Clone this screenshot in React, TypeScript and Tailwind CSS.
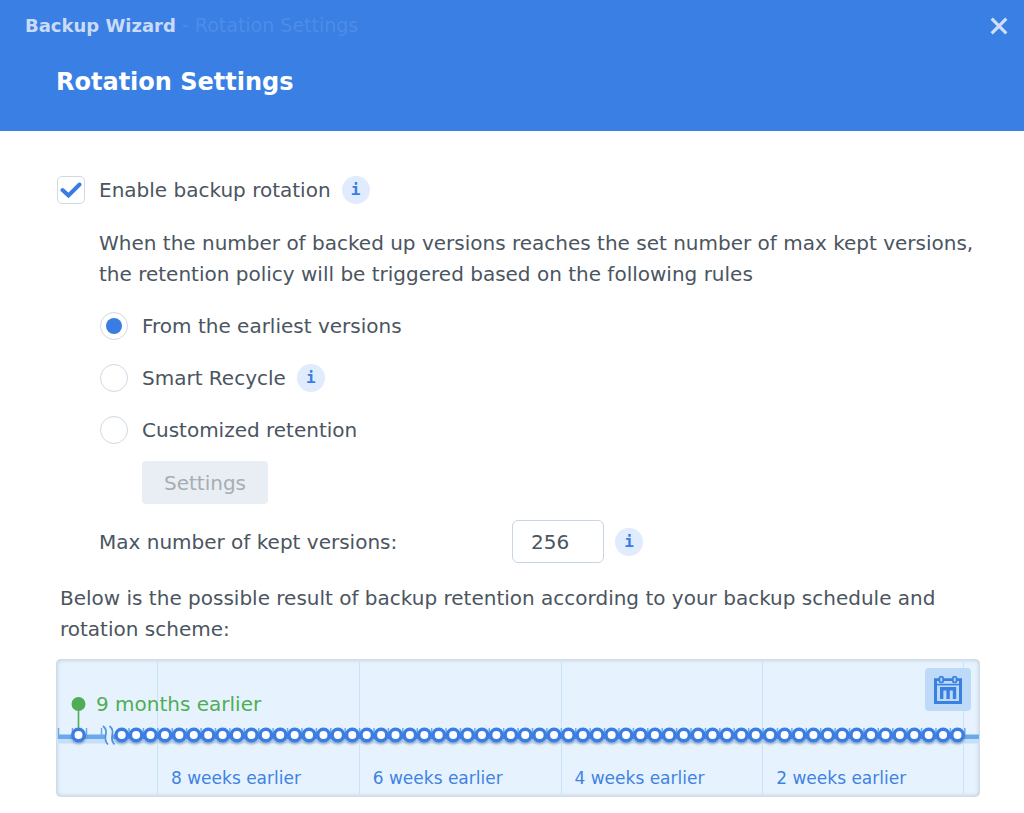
import { useState } from 'react';
import { clsx } from 'clsx';

const POLICIES = [
  { id: 'earliest', label: 'From the earliest versions', info: false },
  { id: 'smart', label: 'Smart Recycle', info: true },
  { id: 'custom', label: 'Customized retention', info: false },
];

const WEEKS = ['8 weeks earlier', '6 weeks earlier', '4 weeks earlier', '2 weeks earlier'];

// One slot per day, counted back from the newest version
const DAYS = 59;
const DAY_WIDTH = 14.41;
const LAST_TICK = 908;

const InfoButton = ({ label }: { label: string }) => (
  <button
    type="button"
    aria-label={label}
    className="flex size-7 items-center justify-center rounded-full bg-[#e0ebfd] font-['DejaVu_Sans_Mono',monospace] text-base leading-none font-bold text-[#3a7de2]"
  >
    i
  </button>
);

const CalendarIcon = () => (
  <svg viewBox="0 0 28 28" className="size-7" fill="none" stroke="#3a80e0" aria-hidden="true">
    <path d="M1.5 3V26.500H26.500V3" strokeWidth="3" />
    <path d="M0 3.6H5M9.500 3.6H18.5M23 3.6H28" strokeWidth="2.8" />
    <path d="M2 8.600H26" strokeWidth="1.6" />
    <rect x="5.500" y="0.900" width="3.6" height="5.400" rx="1" strokeWidth="1.800" />
    <rect x="18.900" y="0.900" width="3.6" height="5.400" rx="1" strokeWidth="1.800" />
    <path d="M6 12.800H22.200M7.700 13V23M14.100 13V23M20.500 13V23" strokeWidth="3.4" />
  </svg>
);

const Timeline = () => {
  const days = Array.from({ length: DAYS }, (_, i) => LAST_TICK - i * DAY_WIDTH);

  return (
    <svg viewBox="0 0 924 138" className="absolute inset-0 h-full w-full" aria-hidden="true">
      <defs>
        <filter id="dot-shadow" x="-5%" y="-50%" width="110%" height="250%">
          <feDropShadow dx="0" dy="2" stdDeviation="1.2" floodColor="#1c3f70" floodOpacity="0.35" />
        </filter>
      </defs>

      <rect x="2" y="80" width="921" height="4.5" fill="#c6def8" />
      <rect x="2" y="75.500" width="921" height="4.5" fill="#68aaec" />

      {/* Day ticks */}
      <g stroke="#68aaec" strokeWidth="1.5">
        <path d="M2.500 69V80M16.500 69V79M30.500 69V79M45.500 69V79" />
        {days.map((x) => (
          <path key={x} d={`M${x + 0.8} 69V79`} />
        ))}
      </g>

      {/* Gap between the oldest version and the daily ones */}
      <path d="M47.500 67C54 73 45 79 51.500 85.500H58C52 79 60.500 73 54 67Z" fill="#e6f3fe" />
      <g fill="none" stroke="#4f93e4" strokeWidth="1.7">
        <path d="M47 67C54.500 73 45 79 52 85.500" />
        <path d="M53.500 67C61 73 51.500 79 58.500 85.500" />
      </g>

      <path d="M22.500 45V71" stroke="#4fae55" strokeWidth="1.6" />
      <circle cx="22.500" cy="45" r="7" fill="#4fae55" />

      <g fill="#fff" stroke="#3a7de2" strokeWidth="3.4" filter="url(#dot-shadow)">
        <circle cx="22.500" cy="76" r="5.700" />
        {days.map((x) => (
          <circle key={x} cx={x - 6.5} cy="76" r="5.700" />
        ))}
      </g>
    </svg>
  );
};

export default function App() {
  const [enabled, setEnabled] = useState(true);
  const [policy, setPolicy] = useState('earliest');
  const [maxVersions, setMaxVersions] = useState('256');

  return (
    <div className="min-h-screen bg-white font-['DejaVu_Sans',Verdana,sans-serif] text-xl text-[#4b555f]">
      <header className="bg-[#3a7fe3] pb-[31px]">
        <div className="flex h-13 items-center justify-between pr-3.5 pl-[25px]">
          <p className="text-[19px] text-[#4d8ce8]">
            <span className="text-lg font-bold text-[#c9dbf7]">Backup Wizard</span> - Rotation Settings
          </p>
          <button type="button" aria-label="Close" className="p-0.5">
            <svg viewBox="0 0 16 16" className="size-[18px]" stroke="#cfdff8" strokeWidth="2.8" aria-hidden="true">
              <path d="M1.500 1.500L14.500 14.500M14.500 1.500L1.500 14.500" />
            </svg>
          </button>
        </div>
        <h1 className="mt-3 pl-14 text-2xl leading-9 font-bold text-white">Rotation Settings</h1>
      </header>

      <main className="pt-[45px] pr-11 pb-4 pl-14">
        <div className="flex h-7 items-center gap-[11px] pl-px">
          <label className="flex items-center gap-3.5">
            <span className="grid size-7 place-items-center">
              <input
                type="checkbox"
                checked={enabled}
                onChange={(e) => setEnabled(e.target.checked)}
                className="peer col-start-1 row-start-1 size-7 appearance-none rounded-[5px] border border-[#cfdae4] bg-white"
              />
              <svg
                viewBox="0 0 22 16"
                className="pointer-events-none invisible col-start-1 row-start-1 h-4 w-[22px] peer-checked:visible"
                fill="none"
                stroke="#3a7de2"
                strokeWidth="4"
                strokeLinecap="round"
                aria-hidden="true"
              >
                <path d="M2.500 8L8.500 13.500L19.500 2.500" />
              </svg>
            </span>
            Enable backup rotation
          </label>
          <InfoButton label="About backup rotation" />
        </div>

        <div className="pl-[43px]">
          <p className="-mr-4 mt-6 leading-[31px]">
            When the number of backed up versions reaches the set number of max kept versions, the retention policy
            will be triggered based on the following rules
          </p>

          <div className="mt-[22px] flex flex-col gap-6 pl-px">
            {POLICIES.map(({ id, label, info }) => (
              <div key={id} className="flex h-7 items-center gap-[11px]">
                <label className="flex items-center gap-3.5">
                  <input
                    type="radio"
                    name="policy"
                    checked={policy === id}
                    onChange={() => setPolicy(id)}
                    className={clsx(
                      'size-7 appearance-none rounded-full border border-[#cfdae4] bg-clip-content p-[5px]',
                      policy === id ? 'bg-[#3a7de2]' : 'bg-white',
                    )}
                  />
                  {label}
                </label>
                {info && <InfoButton label={`About ${label}`} />}
              </div>
            ))}
          </div>

          <button
            type="button"
            disabled={policy !== 'custom'}
            className="mt-[17px] ml-[43px] h-[43px] rounded bg-[#e8eef3] px-[22px] disabled:text-[#a7adb2]"
          >
            Settings
          </button>

          <div className="mt-4 flex h-[43px] items-center">
            <label htmlFor="max-versions" className="w-[413px]">
              Max number of kept versions:
            </label>
            <input
              id="max-versions"
              type="text"
              value={maxVersions}
              onChange={(e) => setMaxVersions(e.target.value)}
              className="mr-[11px] h-[43px] w-[92px] rounded-md border border-[#c8d5e2] px-[18px]"
            />
            <InfoButton label="About kept versions" />
          </div>
        </div>

        <p className="mt-5 pl-1 leading-[31px]">
          Below is the possible result of backup retention according to your backup schedule and rotation scheme:
        </p>

        <section
          aria-label="Retention preview"
          className="relative mt-3.5 h-[138px] rounded-[5px] bg-[#e6f3fe] shadow-[inset_0_0_4px_1px_#c0ccd6]"
        >
          <div className="grid h-full grid-cols-4 pr-4 pl-[101px] text-[17px] text-[#3f82e3]">
            {WEEKS.map((week) => (
              <div key={week} className="flex items-end border-l border-[#cbe3f9] pb-1.5 pl-[13px] last:border-r">
                {week}
              </div>
            ))}
          </div>
          <Timeline />
          <p className="absolute top-[31px] left-10 text-[#4fae55]">9 months earlier</p>
          <button
            type="button"
            aria-label="Show calendar"
            className="absolute top-[9px] right-[9px] flex h-[43px] w-[46px] items-center justify-center rounded bg-[#bddbf8]"
          >
            <CalendarIcon />
          </button>
        </section>
      </main>
    </div>
  );
}
